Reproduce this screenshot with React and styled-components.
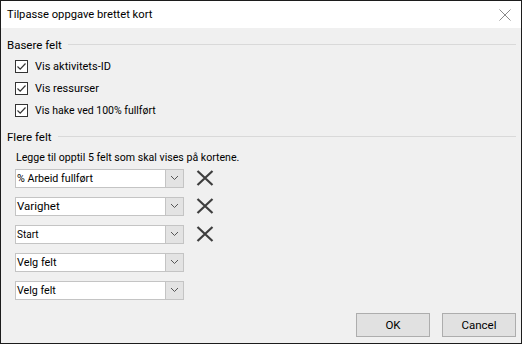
import React from "react";
import styled, { createGlobalStyle } from "styled-components";

const Global = createGlobalStyle`
  html, body { margin: 0; padding: 0; background: #f0f0f0; }
  * { box-sizing: border-box; }
`;

const Window = styled.div`
  width: 522px;
  height: 344px;
  border: 1px solid #1c1c1c;
  background: #f0f0f0;
  display: flex;
  flex-direction: column;
  font-family: Roboto, "Noto Sans", sans-serif;
  color: #000;
`;

const TitleBar = styled.div`
  height: 27px;
  background: #fff;
  display: flex;
  align-items: center;
  justify-content: space-between;
  padding: 0 10px 0 6px;
  font-size: 11.2px;
`;

const Body = styled.div`
  flex: 1;
  display: flex;
  flex-direction: column;
  padding: 9px 5px 0 6px;
`;

const GroupHeader = styled.div`
  display: flex;
  align-items: center;
  gap: 6px;
  font-size: 11.5px;
  height: 16px;
  margin-top: ${(p) => p.$top || 0}px;

  &::after {
    content: "";
    flex: 1;
    height: 1px;
    background: #d9d9d9;
    margin-top: -2px;
  }
`;

const CheckList = styled.div`
  display: flex;
  flex-direction: column;
  gap: 9px;
  padding: 7px 0 0 8px;
`;

const CheckRow = styled.label`
  display: flex;
  align-items: center;
  gap: 7px;
  font-size: ${(p) => p.$size || 11}px;
  height: 13px;
`;

const Box = styled.span`
  width: 13px;
  height: 13px;
  border: 1px solid #333;
  background: #fff;
  display: flex;
  align-items: center;
  justify-content: center;
`;

const Hint = styled.div`
  font-size: 10.6px;
  padding: 6px 0 0 9px;
  height: 22px;
`;

const Fields = styled.div`
  display: flex;
  flex-direction: column;
  gap: 10px;
  padding: 2px 0 0 8px;
`;

const FieldRow = styled.div`
  display: flex;
  align-items: center;
  gap: 12px;
  height: 18px;
`;

const Select = styled.div`
  width: 169px;
  height: 19px;
  border: 1px solid #c4c4c4;
  background: #fff;
  display: flex;
  align-items: stretch;
`;

const SelectText = styled.span`
  flex: 1;
  display: flex;
  align-items: center;
  padding-left: 1px;
  font-size: ${(p) => p.$size || 10.8}px;
  white-space: nowrap;
`;

const Arrow = styled.span`
  width: 18px;
  background: #e3e3e3;
  border-left: 1px solid #c4c4c4;
  display: flex;
  align-items: center;
  justify-content: center;
`;

const Footer = styled.div`
  margin-top: auto;
  display: flex;
  justify-content: flex-end;
  gap: 12px;
  padding: 0 0 6px 0;
`;

const Button = styled.button`
  width: 74px;
  height: 24px;
  background: #e1e1e1;
  border: 1px solid #adadad;
  font-family: Roboto, "Noto Sans", sans-serif;
  font-size: 11.5px;
  color: #000;
  padding: 0;
`;

const Check = () => (
  <svg width="11" height="11" viewBox="0 0 11 11">
    <path d="M1.5 5.5 L4.2 8.2 L9.5 2.5" fill="none" stroke="#333" strokeWidth="1.2" />
  </svg>
);

const Chevron = () => (
  <svg width="9" height="6" viewBox="0 0 9 6">
    <path d="M1 1 L4.5 4.5 L8 1" fill="none" stroke="#555" strokeWidth="1" />
  </svg>
);

const Remove = () => (
  <svg width="18" height="16" viewBox="0 0 18 16">
    <path d="M1.5 1 L16.5 15 M16.5 1 L1.5 15" stroke="#3e3e3e" strokeWidth="2.2" />
  </svg>
);

const Close = () => (
  <svg width="12" height="12" viewBox="0 0 12 12">
    <path d="M0.5 0.5 L11.5 11.5 M11.5 0.5 L0.5 11.5" stroke="#8a8a8a" strokeWidth="1" />
  </svg>
);

const fields = [
  { label: "% Arbeid fullført", size: 10.7, removable: true },
  { label: "Varighet", size: 11.5, removable: true },
  { label: "Start", size: 10, removable: true },
  { label: "Velg felt", size: 10.9 },
  { label: "Velg felt", size: 10.7 },
];

export default function App() {
  return (
    <>
      <Global />
      <Window>
        <TitleBar>
          <span>Tilpasse oppgave brettet kort</span>
          <Close />
        </TitleBar>
        <Body>
          <GroupHeader>Basere felt</GroupHeader>
          <CheckList>
            <CheckRow><Box><Check /></Box>Vis aktivitets-ID</CheckRow>
            <CheckRow><Box><Check /></Box>Vis ressurser</CheckRow>
            <CheckRow $size={10.5}><Box><Check /></Box>Vis hake ved 100% fullført</CheckRow>
          </CheckList>
          <GroupHeader $top={12}>Flere felt</GroupHeader>
          <Hint>Legge til opptil 5 felt som skal vises på kortene.</Hint>
          <Fields>
            {fields.map((f, i) => (
              <FieldRow key={i}>
                <Select>
                  <SelectText $size={f.size}>{f.label}</SelectText>
                  <Arrow><Chevron /></Arrow>
                </Select>
                {f.removable && <Remove />}
              </FieldRow>
            ))}
          </Fields>
          <Footer>
            <Button>OK</Button>
            <Button>Cancel</Button>
          </Footer>
        </Body>
      </Window>
    </>
  );
}
